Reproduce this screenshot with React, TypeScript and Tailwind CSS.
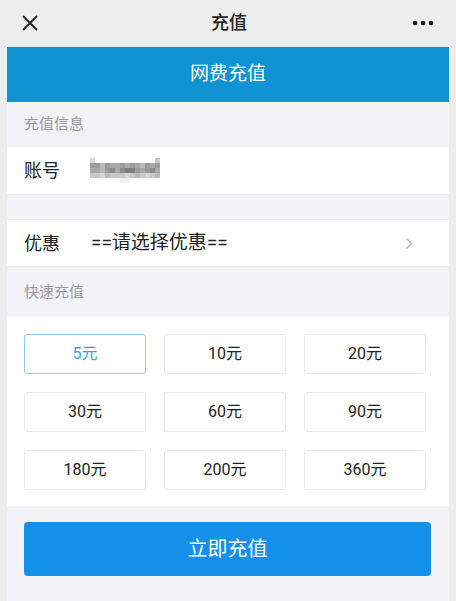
import React from 'react'

const amounts = ['5元', '10元', '20元', '30元', '60元', '90元', '180元', '200元', '360元']

// 马赛克账号：5 行 x 14 列的灰度块
const mosaic = [
  'dffffffffffffc',
  '99b9aa9a9ab9a9',
  'aab98a8779a98a',
  'ccdbcccdcbcdcb',
  'ffffffeeffffff',
]

function shade(c: string) {
  const map: Record<string, string> = {
    '7': '#7e7e7e',
    '8': '#8c8c8c',
    '9': '#9b9b9b',
    a: '#a9a9a9',
    b: '#b8b8b8',
    c: '#c8c8c8',
    d: '#d6d6d6',
    e: '#f0f0f0',
    f: '#ffffff',
  }
  return map[c] ?? '#ffffff'
}

function Mosaic() {
  return (
    <svg width="70" height="25" viewBox="0 0 70 25" aria-label="账号">
      {mosaic.map((row, r) =>
        row.split('').map((c, i) => (
          <rect key={`${r}-${i}`} x={i * 5} y={r * 5} width="5" height="5" fill={shade(c)} />
        ))
      )}
    </svg>
  )
}

export default function App() {
  return (
    <div className="w-[456px] h-[601px] overflow-hidden bg-[#ededed] font-['Roboto','Noto_Sans_CJK_SC',sans-serif] text-[#222]">
      {/* 顶部导航 */}
      <div className="h-[47px] flex items-center justify-between px-[22px] border-b border-[#dfe6ec]">
        <svg width="16" height="16" viewBox="0 0 16 16">
          <path d="M1.5 1.5 L14.5 14.5 M14.5 1.5 L1.5 14.5" stroke="#222" strokeWidth="1.8" strokeLinecap="round" />
        </svg>
        <span className="text-[18px] font-medium leading-none pl-[8px]">充值</span>
        <svg width="22" height="6" viewBox="0 0 22 6">
          <circle cx="3" cy="3" r="2.3" fill="#111" />
          <circle cx="11" cy="3" r="2.3" fill="#111" />
          <circle cx="19" cy="3" r="2.3" fill="#111" />
        </svg>
      </div>

      <div className="mx-[7px] bg-[#f3f3f7] h-[554px]">
        {/* 标题横幅 */}
        <div className="h-[55px] bg-[#1192d3] flex items-center justify-center text-white text-[19px]">
          网费充值
        </div>

        <div className="h-[45px] flex items-center px-[17px] text-[15px] text-[#9a9a9a]">充值信息</div>

        <div className="h-[48px] bg-white flex items-center px-[17px] border-b border-[#ececf0]">
          <span className="text-[18px] w-[66px]">账号</span>
          <Mosaic />
        </div>

        <div className="h-[24px]" />

        <div className="h-[48px] bg-white flex items-center px-[17px] border-y border-[#ececf0]">
          <span className="text-[18px] w-[67px]">优惠</span>
          <span className="text-[19px] flex-1">==请选择优惠==</span>
          <svg width="8" height="13" viewBox="0 0 8 13" className="mr-[19px]">
            <path d="M1.5 1.5 L6.5 6.5 L1.5 11.5" fill="none" stroke="#bbb" strokeWidth="1.6" />
          </svg>
        </div>

        <div className="h-[50px] flex items-center px-[17px] text-[15px] text-[#9a9a9a]">快速充值</div>

        {/* 快速充值金额 */}
        <div className="bg-white pt-[17px] pb-[16px] px-[17px]">
          <div className="grid grid-cols-[122px_122px_122px] gap-x-[18px] gap-y-[18px]">
            {amounts.map((a, i) => (
              <div
                key={a}
                className={
                  i === 0
                    ? 'h-[40px] flex items-center justify-center rounded-[3px] border border-[#92cdf6] text-[#3a9ff0] text-[16px]'
                    : 'h-[40px] flex items-center justify-center rounded-[3px] border border-[#ebebeb] text-[16px]'
                }
              >
                {a}
              </div>
            ))}
          </div>
        </div>

        <div className="px-[17px] pt-[16px]">
          <button className="w-[407px] h-[54px] rounded-[4px] bg-[#1490e8] text-white text-[20px]">
            立即充值
          </button>
        </div>
      </div>
    </div>
  )
}
